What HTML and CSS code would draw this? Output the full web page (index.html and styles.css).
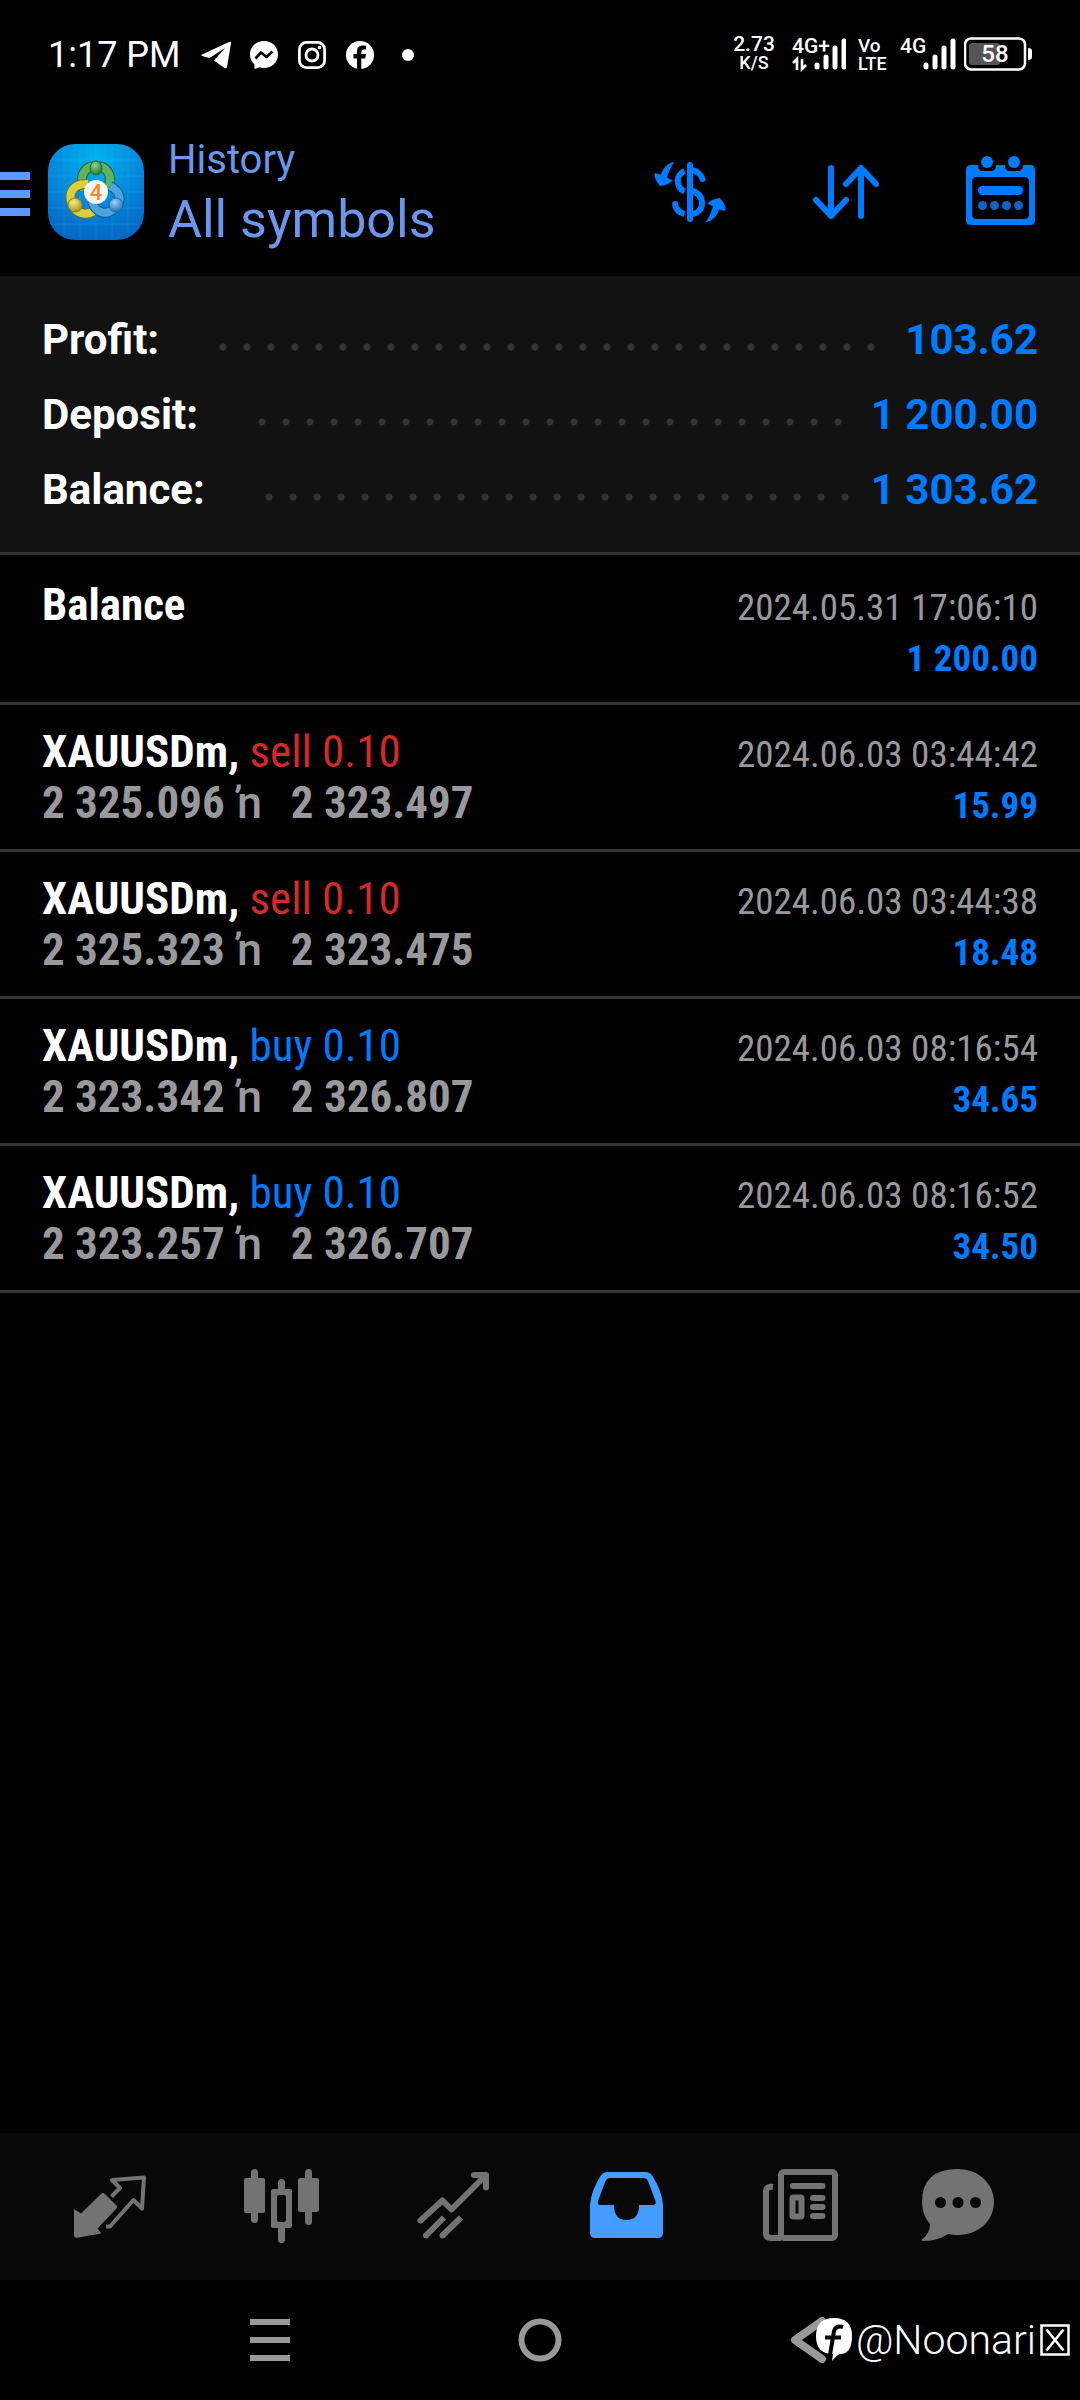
FILE: index.html
```html
<!DOCTYPE html>
<html lang="en">
<head>
<meta charset="utf-8">
<meta name="viewport" content="width=device-width, initial-scale=1">
<title>History</title>
<link rel="stylesheet" href="styles.css">
</head>
<body>
<div class="screen">
  <div class="status">
    <span class="clock">1:17 PM</span>
    <div class="notices">
      <svg width="30" height="30" viewBox="0 0 30 30"><path fill="#fff" d="M1 14.500 28 2q2.500-1 2 1.500L26 27q-.5 2-2.500 1L13 20.500 24 8 8.500 18 1 16q-1-.8 0-1.500z"/></svg>
      <svg width="30" height="30" viewBox="0 0 30 30"><path fill="#fff" d="M15 1C7 1 1 6.800 1 14.500c0 4 1.700 7.500 4.500 10V29l5-1.800c1.400.5 3 .8 4.500.8 8 0 14-5.800 14-13.500S23 1 15 1z"/><path fill="none" stroke="#000" stroke-width="2.600" stroke-linejoin="round" d="m6.500 18.500 5.500-6 5.500 4.500 6-5.500"/></svg>
      <svg width="30" height="30" viewBox="0 0 30 30"><g fill="none" stroke="#fff" stroke-width="2.800"><rect x="2.400" y="2.400" width="25.200" height="25.200" rx="7"/><circle cx="15" cy="15" r="6"/></g><circle cx="22.500" cy="7.500" r="1.800" fill="#fff"/></svg>
      <svg width="30" height="30" viewBox="0 0 30 30"><circle cx="15" cy="15" r="14" fill="#fff"/><path fill="#000" d="M12 30V18.500H8.500V14H12v-2.500c0-4 2.300-6 6-6 1.300 0 2.500.2 3 .3v3.700h-2c-2 0-2.700 1-2.700 2.500v2H21l-.8 4.500h-3.900V30z"/></svg>
      <svg width="30" height="30" viewBox="0 0 30 30"><circle cx="15" cy="15" r="6" fill="#fff"/></svg>
    </div>
    <div class="signals">
      <svg class="speed" width="40" height="48" viewBox="0 -5 40 48"><text x="20" y="15" font-size="21">2.73</text><text x="20" y="33" font-size="18">K/S</text></svg>
      <svg class="cell" width="54" height="48" viewBox="0 -5 54 48"><text x="0" y="17" font-size="21">4G+</text><path d="M25 29v2M34 21v10M43 12v19M52 5v26" stroke="#fff" stroke-width="5" stroke-linecap="round"/><path d="M5 34V23l-4 4M10 23v10l4-4" fill="none" stroke="#fff" stroke-width="2.600"/></svg>
      <svg class="volte" width="34" height="48" viewBox="0 -5 34 48"><text x="0" y="16" font-size="19">Vo</text><text x="0" y="34" font-size="18">LTE</text></svg>
      <svg class="cell2" width="56" height="48" viewBox="0 -5 56 48"><text x="0" y="17" font-size="21">4G</text><path d="M26 29v2M35 21v10M44 12v19M53 5v26" stroke="#fff" stroke-width="5" stroke-linecap="round"/></svg>
      <svg class="battery" width="70" height="48" viewBox="0 -5 70 48"><rect x="1" y="2.500" width="60" height="31" rx="6" fill="none" stroke="#fff" stroke-width="2.500"/><rect x="5" y="7" width="31" height="22" rx="3" fill="#555"/><text x="31" y="26" font-size="24">58</text><path d="M64 12q4 0 4 3v6q0 3-4 3z" fill="#fff"/></svg>
    </div>
  </div>

  <header class="bar">
    <button class="burger" aria-label="Menu"><i></i><i></i><i></i></button>
    <svg class="logo" width="96" height="96" viewBox="0 0 96 96" role="img" aria-label="MetaTrader 4">
      <defs>
        <radialGradient id="sky" cx=".5" cy=".15" r=".9"><stop offset="0" stop-color="#00b4ee"/><stop offset=".5" stop-color="#0489de"/><stop offset="1" stop-color="#0565c0"/></radialGradient>
        <radialGradient id="green" cx=".4" cy=".3" r=".7"><stop offset="0" stop-color="#8fd08c"/><stop offset="1" stop-color="#2a7a35"/></radialGradient>
        <radialGradient id="gold" cx=".4" cy=".3" r=".7"><stop offset="0" stop-color="#f2ee8a"/><stop offset="1" stop-color="#a89a17"/></radialGradient>
        <radialGradient id="blue" cx=".4" cy=".3" r=".7"><stop offset="0" stop-color="#9bd4f5"/><stop offset="1" stop-color="#2374b8"/></radialGradient>
      </defs>
      <rect width="96" height="96" rx="27" fill="url(#sky)"/>
      <path d="M16 4v88M32 0v96M48 0v96M64 0v96M80 4v88M4 16h88M0 32h96M0 48h96M0 64h96M4 80h88" stroke="#5cc4f5" stroke-opacity=".15"/>
      <g fill="none">
        <path d="M36 46C30 30 38 22 48 22s18 8 12 24" stroke="#1f6d35" stroke-width="10"/>
        <path d="M36 46C30 30 38 22 48 22s18 8 12 24" stroke="#5fb260" stroke-width="8"/>
        <path d="M40 40c-16-1-20 10-16 20s14 12 22 7" stroke="#7a760c" stroke-width="10"/>
        <path d="M40 40c-16-1-20 10-16 20s14 12 22 7" stroke="#d8cf45" stroke-width="8"/>
        <path d="M62 42c12 6 12 16 4 23s-18 4-22-7" stroke="#14599c" stroke-width="10"/>
        <path d="M62 42c12 6 12 16 4 23s-18 4-22-7" stroke="#4aa5de" stroke-width="8"/>
      </g>
      <ellipse cx="48" cy="24" rx="6" ry="7" fill="url(#green)" stroke="#1f6d35"/>
      <circle cx="27" cy="61" r="7" fill="url(#gold)" stroke="#8a8010"/>
      <circle cx="68" cy="61" r="7" fill="url(#blue)" stroke="#1b68ab"/>
      <circle cx="48" cy="48" r="12" fill="#f5f5f5"/>
      <text x="48" y="56" class="four">4</text>
    </svg>
    <div class="titles"><h1>History</h1><p>All symbols</p></div>
    <div class="actions">
      <button aria-label="Currency"><svg width="72" height="84" viewBox="0 0 72 84">
        <g id="turn"><path fill="#007aff" d="M20.500 12C13 13 9 18 7 24.500L.5 23C0 28 3 33 6.500 36c4.500-.5 9.500-2.500 12-5.500L13 27.500c2-6.500 4-11.500 7.500-15.500z"/></g><use href="#turn" transform="rotate(180 36 42)"/>
        <g fill="none" stroke="#007aff" stroke-width="6"><path d="M36 15v54" stroke-linecap="round"/><path d="M30.500 21c-9 4-9 16 0 20.500"/><path stroke-linecap="round" d="M36 20c6 0 11 4 12.500 9M36 40c7 2 12 6 12 13s-5 11-11 11"/><path d="M21 54c1 6 5 9 9.500 10"/></g><circle cx="21.200" cy="54" r="3" fill="#007aff"/></svg></button>
      <button aria-label="Sort"><svg width="72" height="84" viewBox="0 0 72 84"><path fill="none" stroke="#007aff" stroke-width="6" stroke-linecap="round" stroke-linejoin="round" d="M21 18v48M6 50l15 16 15-16M51 66V18M36 34l15-16 15 16"/></svg></button>
      <button aria-label="Period"><svg width="72" height="84" viewBox="0 0 72 84"><path fill="#007aff" fill-rule="evenodd" d="M5 15h7q0 6 5 6h8q5 0 5-6h9q0 6 5 6h8q5 0 5-6h7q5 0 5 5v50q0 5-5 5H5q-5 0-5-5V20q0-5 5-5zm6 12q-5 0-5 5v32q0 5 5 5h47q5 0 5-5V32q0-5-5-5z"/><circle cx="21" cy="12" r="6" fill="#007aff"/><circle cx="48" cy="12" r="6" fill="#007aff"/><rect x="12" y="36" width="45" height="9" rx="4.500" fill="#007aff"/><g fill="#0f64c8"><circle cx="16.500" cy="55.500" r="4.500"/><circle cx="28.500" cy="55.500" r="4.500"/><circle cx="40.500" cy="55.500" r="4.500"/><circle cx="52.500" cy="55.500" r="4.500"/></g></svg></button>
    </div>
  </header>

  <dl class="summary">
    <div><dt>Profit:</dt><dd>103.62</dd></div>
    <div><dt>Deposit:</dt><dd>1 200.00</dd></div>
    <div><dt>Balance:</dt><dd>1 303.62</dd></div>
  </dl>

  <ul class="deals">
    <li class="funds"><div><strong>Balance</strong><time>2024.05.31 17:06:10</time></div><div><span class="prices">&nbsp;</span><b>1 200.00</b></div></li>
    <li><div><strong>XAUUSDm, <em class="sell">sell 0.10</em></strong><time>2024.06.03 03:44:42</time></div><div><span class="prices">2 325.096 <i>ŉ</i>  2 323.497</span><b>15.99</b></div></li>
    <li><div><strong>XAUUSDm, <em class="sell">sell 0.10</em></strong><time>2024.06.03 03:44:38</time></div><div><span class="prices">2 325.323 <i>ŉ</i>  2 323.475</span><b>18.48</b></div></li>
    <li><div><strong>XAUUSDm, <em class="buy">buy 0.10</em></strong><time>2024.06.03 08:16:54</time></div><div><span class="prices">2 323.342 <i>ŉ</i>  2 326.807</span><b>34.65</b></div></li>
    <li><div><strong>XAUUSDm, <em class="buy">buy 0.10</em></strong><time>2024.06.03 08:16:52</time></div><div><span class="prices">2 323.257 <i>ŉ</i>  2 326.707</span><b>34.50</b></div></li>
  </ul>

  <nav class="tabs">
    <button aria-label="Quotes"><svg width="100" height="79"><path fill="#737373" d="M45 27l11 11q2 2 0 4L37.500 61.500l4 5L17 70.700q-3 .3-3-2.700V42l7 4.500L41 27q2-2 4 0z"/><path fill="none" stroke="#737373" stroke-width="4" stroke-linejoin="round" d="M51.500 29.500l8.500-8.500-8-8 32-2.500-2 31-8.500-8.500L50 59.500h-4"/></svg></button>
    <button aria-label="Charts"><svg width="100" height="79"><g fill="#737373"><rect x="12" y="11" width="21" height="35" rx="2"/><rect x="19" y="2" width="7" height="54" rx="3.500"/><rect x="66" y="11" width="21" height="34" rx="2"/><rect x="73" y="2" width="7" height="56" rx="3.500"/><rect x="46" y="12" width="7" height="14" rx="3.500"/><rect x="46" y="58" width="7" height="18" rx="3.500"/><path fill-rule="evenodd" d="M41 22h17q2 0 2 2v35q0 2-2 2H41q-2 0-2-2V24q0-2 2-2zm6 6q-2 0-2 2v23q0 2 2 2h5q2 0 2-2V30q0-2-2-2z"/></g></svg></button>
    <button aria-label="Trade"><svg width="100" height="79"><path fill="none" stroke="#737373" stroke-width="6" stroke-linecap="round" stroke-linejoin="round" d="M16.500 53.500l22-20 9 9L82 8M70 8h12v12.500"/><path stroke="#737373" stroke-width="6" d="M22 68.500l18-18M38.500 68.500l18.500-18"/><circle cx="22" cy="68.500" r="3" fill="#737373"/><circle cx="38.500" cy="68.500" r="3" fill="#737373"/></svg></button>
    <button aria-label="History"><svg width="100" height="79"><path fill="#439cff" fill-rule="evenodd" d="M32 5h37q5 0 7.500 4Q86 24 87 38v28q0 5-5 5H19q-5 0-5-5V38Q15 24 24.500 9 27 5 32 5zm2 6q-3 0-4.500 3L22 34q-1 4 2.500 4H38q0 15 12.500 15T63 38h13.500q4 0 3-4L72 14q-1.500-3-4.500-3z"/></svg></button>
    <button aria-label="News"><svg width="100" height="79"><g fill="none" stroke="#737373" stroke-width="6"><rect x="33" y="5" width="54" height="66" rx="3"/><path d="M25 20q-7-1-7 5v41q0 5 5 5h10"/><path stroke-linecap="round" d="M45 19h29.500M65 31h9.500M65 40h9.500M65 49h9.500"/><rect x="44.500" y="30.500" width="9" height="19" rx="1"/></g></svg></button>
    <button aria-label="Messages"><svg width="100" height="79"><path fill="#737373" fill-rule="evenodd" d="M38 2c20 0 36 14 36 33S58 68 38 68q-6 0-10-1Q18 74 4 74q-4 0-1-2.500Q10 66 10 57 2 48 2 35 2 2 38 2z"/><g fill="#080808"><circle cx="20.500" cy="35.500" r="5.500"/><circle cx="38" cy="35.500" r="5.500"/><circle cx="55.500" cy="35.500" r="5.500"/></g></svg></button>
  </nav>

  <footer class="system">
    <button aria-label="Recent apps"><svg width="46" height="48"><path d="M3 6h40M3 24h40M3 42h40" stroke="#999" stroke-width="6"/></svg></button>
    <button aria-label="Home"><svg width="46" height="48"><circle cx="23" cy="24" r="18.500" fill="none" stroke="#999" stroke-width="6"/></svg></button>
    <button aria-label="Back"><svg width="46" height="48"><path d="M35 5L8 24l27 19" fill="none" stroke="#999" stroke-width="8" stroke-linejoin="round" stroke-linecap="round"/></svg></button>
    <div class="credit">
      <svg width="36" height="44"><path fill="#fff" d="M18 0Q36 0 36 18T24 36q-3 1-8 7l1-7Q0 36 0 18T18 0z"/><path fill="none" stroke="#000" stroke-width="4" d="M27 9q-7-2-9 4l-5 30M9 19.500h16"/></svg>
      <span>@Noonari</span>
      <svg width="30" height="32"><rect x="1.500" y="1.500" width="27" height="29" fill="none" stroke="#fff" stroke-width="2.500"/><path d="M6.500 5.500l17 21M23.500 5.500l-17 21" stroke="#fff" stroke-width="2.500"/></svg>
    </div>
  </footer>
</div>
</body>
</html>
```
FILE: styles.css
```css
* { box-sizing: border-box; }

body {
  margin: 0;
  background: #000;
  color: #fff;
  font-family: Roboto, "Noto Sans", sans-serif;
}

h1, p, dl, dd, ul { margin: 0; padding: 0; }
svg { display: block; }
button { padding: 0; border: 0; background: none; }

.screen {
  min-height: 100vh;
  display: flex;
  flex-direction: column;
}

/* Phone status bar */
.status {
  height: 110px;
  padding: 0 46px 0 48px;
  display: flex;
  align-items: center;
}
.clock { font-size: 36px; margin-right: 20px; }
.notices { display: flex; gap: 18px; }
.signals { margin-left: auto; display: flex; gap: 12px; }
.signals text { fill: #fff; font-weight: 500; }
.speed { margin-right: 6px; }
.speed text, .battery text { text-anchor: middle; }
.volte, .cell2 { margin-right: -4px; }

/* Application bar */
.bar {
  height: 166px;
  padding: 0 42px 2px 0;
  display: flex;
  align-items: center;
}
.burger {
  width: 30px;
  margin-right: 18px;
  padding-top: 4px;
  display: flex;
  flex-direction: column;
  gap: 10px;
}
.burger i { height: 8px; background: #5f99ff; }
.four {
  fill: #f08a24;
  font-size: 22px;
  font-weight: 500;
  text-anchor: middle;
}
.titles { margin-left: 24px; color: #6b96ea; }
.titles h1 { font-size: 40px; font-weight: 400; line-height: 56px; }
.titles p { font-size: 52px; line-height: 64px; }
.actions { margin-left: auto; display: flex; gap: 84px; }

/* Account totals */
.summary {
  padding: 26px 42px 25px;
  background: #121212;
  border-bottom: 3px solid #333;
  font-size: 42px;
  font-weight: 700;
  line-height: 75px;
}
.summary div { display: flex; }
.summary div::before {
  content: "";
  order: 1;
  flex: 1;
  margin: 0 22px 0 52px;
  background: radial-gradient(circle at 12px 45px, #333 3px, transparent 4px) 0 0 / 24px 75px repeat-x;
}
.summary dd { order: 2; color: #007aff; }

/* Deals */
.deals { flex: 1; list-style: none; }
.deals li {
  padding: 21px 42px;
  border-bottom: 3px solid #333;
  font-family: "Roboto Condensed", Roboto, sans-serif;
}
.deals .funds { padding-top: 24px; }
.deals div {
  height: 51px;
  display: flex;
  justify-content: space-between;
  align-items: baseline;
}
.deals strong, .prices { font-size: 45px; line-height: 51px; }
.deals em { font-style: normal; font-weight: 400; }
.prices {
  color: #98989d;
  font-weight: 700;
  white-space: pre;
}
.prices i {
  margin: 0 8px 0 2px;
  font-family: Roboto, sans-serif;
  font-style: normal;
  font-weight: 500;
}
.deals time, .deals b { font-size: 37px; line-height: 40px; }
.deals time { color: #98989d; }
.deals b, .buy { color: #007aff; }
.sell { color: #d22a2a; }

/* Tabs */
.tabs {
  height: 147px;
  padding: 0 60px;
  display: flex;
  align-items: center;
  justify-content: space-between;
  background: #080808;
}

/* System navigation */
.system {
  position: relative;
  height: 120px;
  padding: 0 12.5%;
  display: flex;
  align-items: center;
}
.system button { flex: 1; display: flex; justify-content: center; }
.credit {
  position: absolute;
  right: 10px;
  top: 36px;
  display: flex;
  align-items: center;
  gap: 4px;
  font-size: 41px;
  font-weight: 300;
}
```
